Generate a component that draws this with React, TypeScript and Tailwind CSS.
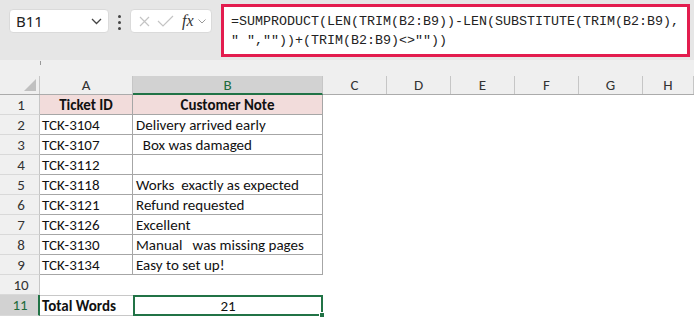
import React from 'react';

const cols = ['A', 'B', 'C', 'D', 'E', 'F', 'G', 'H'];
const colWidths = ['w-[93px]', 'w-[190px]', 'w-[64px]', 'w-[64px]', 'w-[64px]', 'w-[64px]', 'w-[64px]', 'flex-1'];

const rows: [string, string][] = [
  ['TCK-3104', 'Delivery arrived early'],
  ['TCK-3107', '  Box was damaged'],
  ['TCK-3112', ''],
  ['TCK-3118', 'Works  exactly as expected'],
  ['TCK-3121', 'Refund requested'],
  ['TCK-3126', 'Excellent'],
  ['TCK-3130', 'Manual   was missing pages'],
  ['TCK-3134', 'Easy to set up!'],
];

const cellFont = { fontFamily: 'Carlito, Lato, "Noto Sans", sans-serif' };

function RowHead({ n, active }: { n: number; active?: boolean }) {
  return (
    <div
      className={`w-[40px] shrink-0 flex items-center justify-end pr-[7px] pt-[1px] border-b border-[#d9d9d9] text-[15px] ${
        active ? 'bg-[#d2d2d2] text-[#1e6b3c] border-r-2 border-r-[#217346]' : 'bg-[#f0f0f0] text-[#333] border-r border-r-[#c6c6c6]'
      }`}
    >
      <span className="w-[22px] text-center">{n}</span>
    </div>
  );
}

function Toolbar() {
  return (
    <div className="h-[60px] bg-[#e6e6e6] flex items-start relative">
      <div className="mt-[9px] ml-[9px] w-[100px] h-[24px] bg-white rounded-[4px] border border-[#dadada] flex items-center justify-between pl-[6px] pr-[6px] text-[15px] text-[#222]" style={{ fontFamily: '"Noto Sans", sans-serif' }}>
        <span>B11</span>
        <svg width="11" height="7" viewBox="0 0 11 7"><path d="M1 1l4.5 4.5L10 1" stroke="#444" strokeWidth="1.3" fill="none" /></svg>
      </div>
      <div className="mt-[15px] ml-[9px] flex flex-col gap-[3px]">
        <span className="w-[3px] h-[3px] rounded-full bg-[#444]" />
        <span className="w-[3px] h-[3px] rounded-full bg-[#444]" />
        <span className="w-[3px] h-[3px] rounded-full bg-[#444]" />
      </div>
      <div className="mt-[9px] ml-[9px] w-[82px] h-[24px] bg-white rounded-[4px] border border-[#dadada] flex items-center pl-[8px] gap-[7px]">
        <svg width="11" height="11" viewBox="0 0 11 11"><path d="M1 1l9 9M10 1l-9 9" stroke="#c4c4c4" strokeWidth="1.2" /></svg>
        <svg width="17" height="12" viewBox="0 0 17 12"><path d="M1 6l5 5L16 1" stroke="#c4c4c4" strokeWidth="1.2" fill="none" /></svg>
        <span className="text-[16px] italic text-[#333] leading-none ml-[1px]" style={{ fontFamily: '"Liberation Serif", serif' }}>fx</span>
        <svg width="8" height="5" viewBox="0 0 8 5" className="-ml-[3px]"><path d="M0.5 0.5L4 4l3.5-3.5" stroke="#999" strokeWidth="1" fill="none" /></svg>
      </div>
      <div
        className="mt-[4px] ml-[9px] w-[469px] h-[53px] bg-white border-[3px] border-[#e31c4e] pl-[7px] pt-[5px] text-[13.33px] leading-[19px] text-[#222] whitespace-pre"
        style={{ fontFamily: '"Liberation Mono", "DejaVu Sans Mono", monospace' }}
      >
        {'=SUMPRODUCT(LEN(TRIM(B2:B9))-LEN(SUBSTITUTE(TRIM(B2:B9),\n" ",""))+(TRIM(B2:B9)<>""))'}
      </div>
    </div>
  );
}

export default function App() {
  return (
    <div className="w-[694px] h-[319px] overflow-hidden bg-white" style={cellFont}>
      <Toolbar />
      <div className="h-[16px] bg-[#efefef] relative">
        <div className="absolute left-[40px] top-[1px] w-px h-[4px] bg-[#999]" />
      </div>
      {/* column headers */}
      <div className="flex h-[19px] bg-[#efefef] border-b border-[#ababab]">
        <div className="w-[40px] shrink-0 border-r border-[#c6c6c6] relative">
          <svg className="absolute right-[3px] bottom-[3px]" width="12" height="12" viewBox="0 0 12 12"><path d="M12 0L12 12L0 12Z" fill="#c0c0c0" /></svg>
        </div>
        {cols.map((c, i) => (
          <div
            key={c}
            className={`${colWidths[i]} shrink-0 flex items-center justify-center pt-[1px] text-[15px] border-r border-[#c6c6c6] ${
              c === 'B' ? 'bg-[#d2d2d2] text-[#1e6b3c] border-b-2 border-b-[#217346] -mb-px' : 'text-[#333]'
            }`}
          >
            {c}
          </div>
        ))}
      </div>
      {/* row 1 */}
      <div className="flex h-[20px]">
        <RowHead n={1} />
        <div className="w-[93px] shrink-0 bg-[#f2dcdb] border-r border-b border-[#a6a6a6] flex items-center justify-center pt-[2px] font-bold text-[15px] text-[#111]">Ticket ID</div>
        <div className="w-[190px] shrink-0 bg-[#f2dcdb] border-r border-b border-[#a6a6a6] flex items-center justify-center pt-[2px] font-bold text-[15px] text-[#111]">Customer Note</div>
      </div>
      {rows.map(([id, note], i) => (
        <div key={id} className="flex h-[20px]">
          <RowHead n={i + 2} />
          <div className="w-[93px] shrink-0 border-r border-b border-[#a6a6a6] flex items-center pl-[2px] pt-[2px] text-[15px] text-[#111]">{id}</div>
          <div className="w-[190px] shrink-0 border-r border-b border-[#a6a6a6] flex items-center pl-[3px] pt-[2px] text-[15px] text-[#111] whitespace-pre">{note}</div>
        </div>
      ))}
      <div className="flex h-[20px]">
        <RowHead n={10} />
      </div>
      <div className="flex h-[21px]">
        <RowHead n={11} active />
        <div className="w-[93px] shrink-0 border-t border-b border-[#c8c8c8] flex items-center pl-[2px] pt-[1px] font-bold text-[15px] text-[#111]">Total Words</div>
        <div className="w-[190px] shrink-0 border-2 border-[#217346] flex items-center justify-center pt-[1px] text-[15px] text-[#111] relative">
          21
          <span className="absolute -right-[4px] -bottom-[4px] w-[6px] h-[6px] bg-[#217346] border border-white" />
        </div>
      </div>
    </div>
  );
}
